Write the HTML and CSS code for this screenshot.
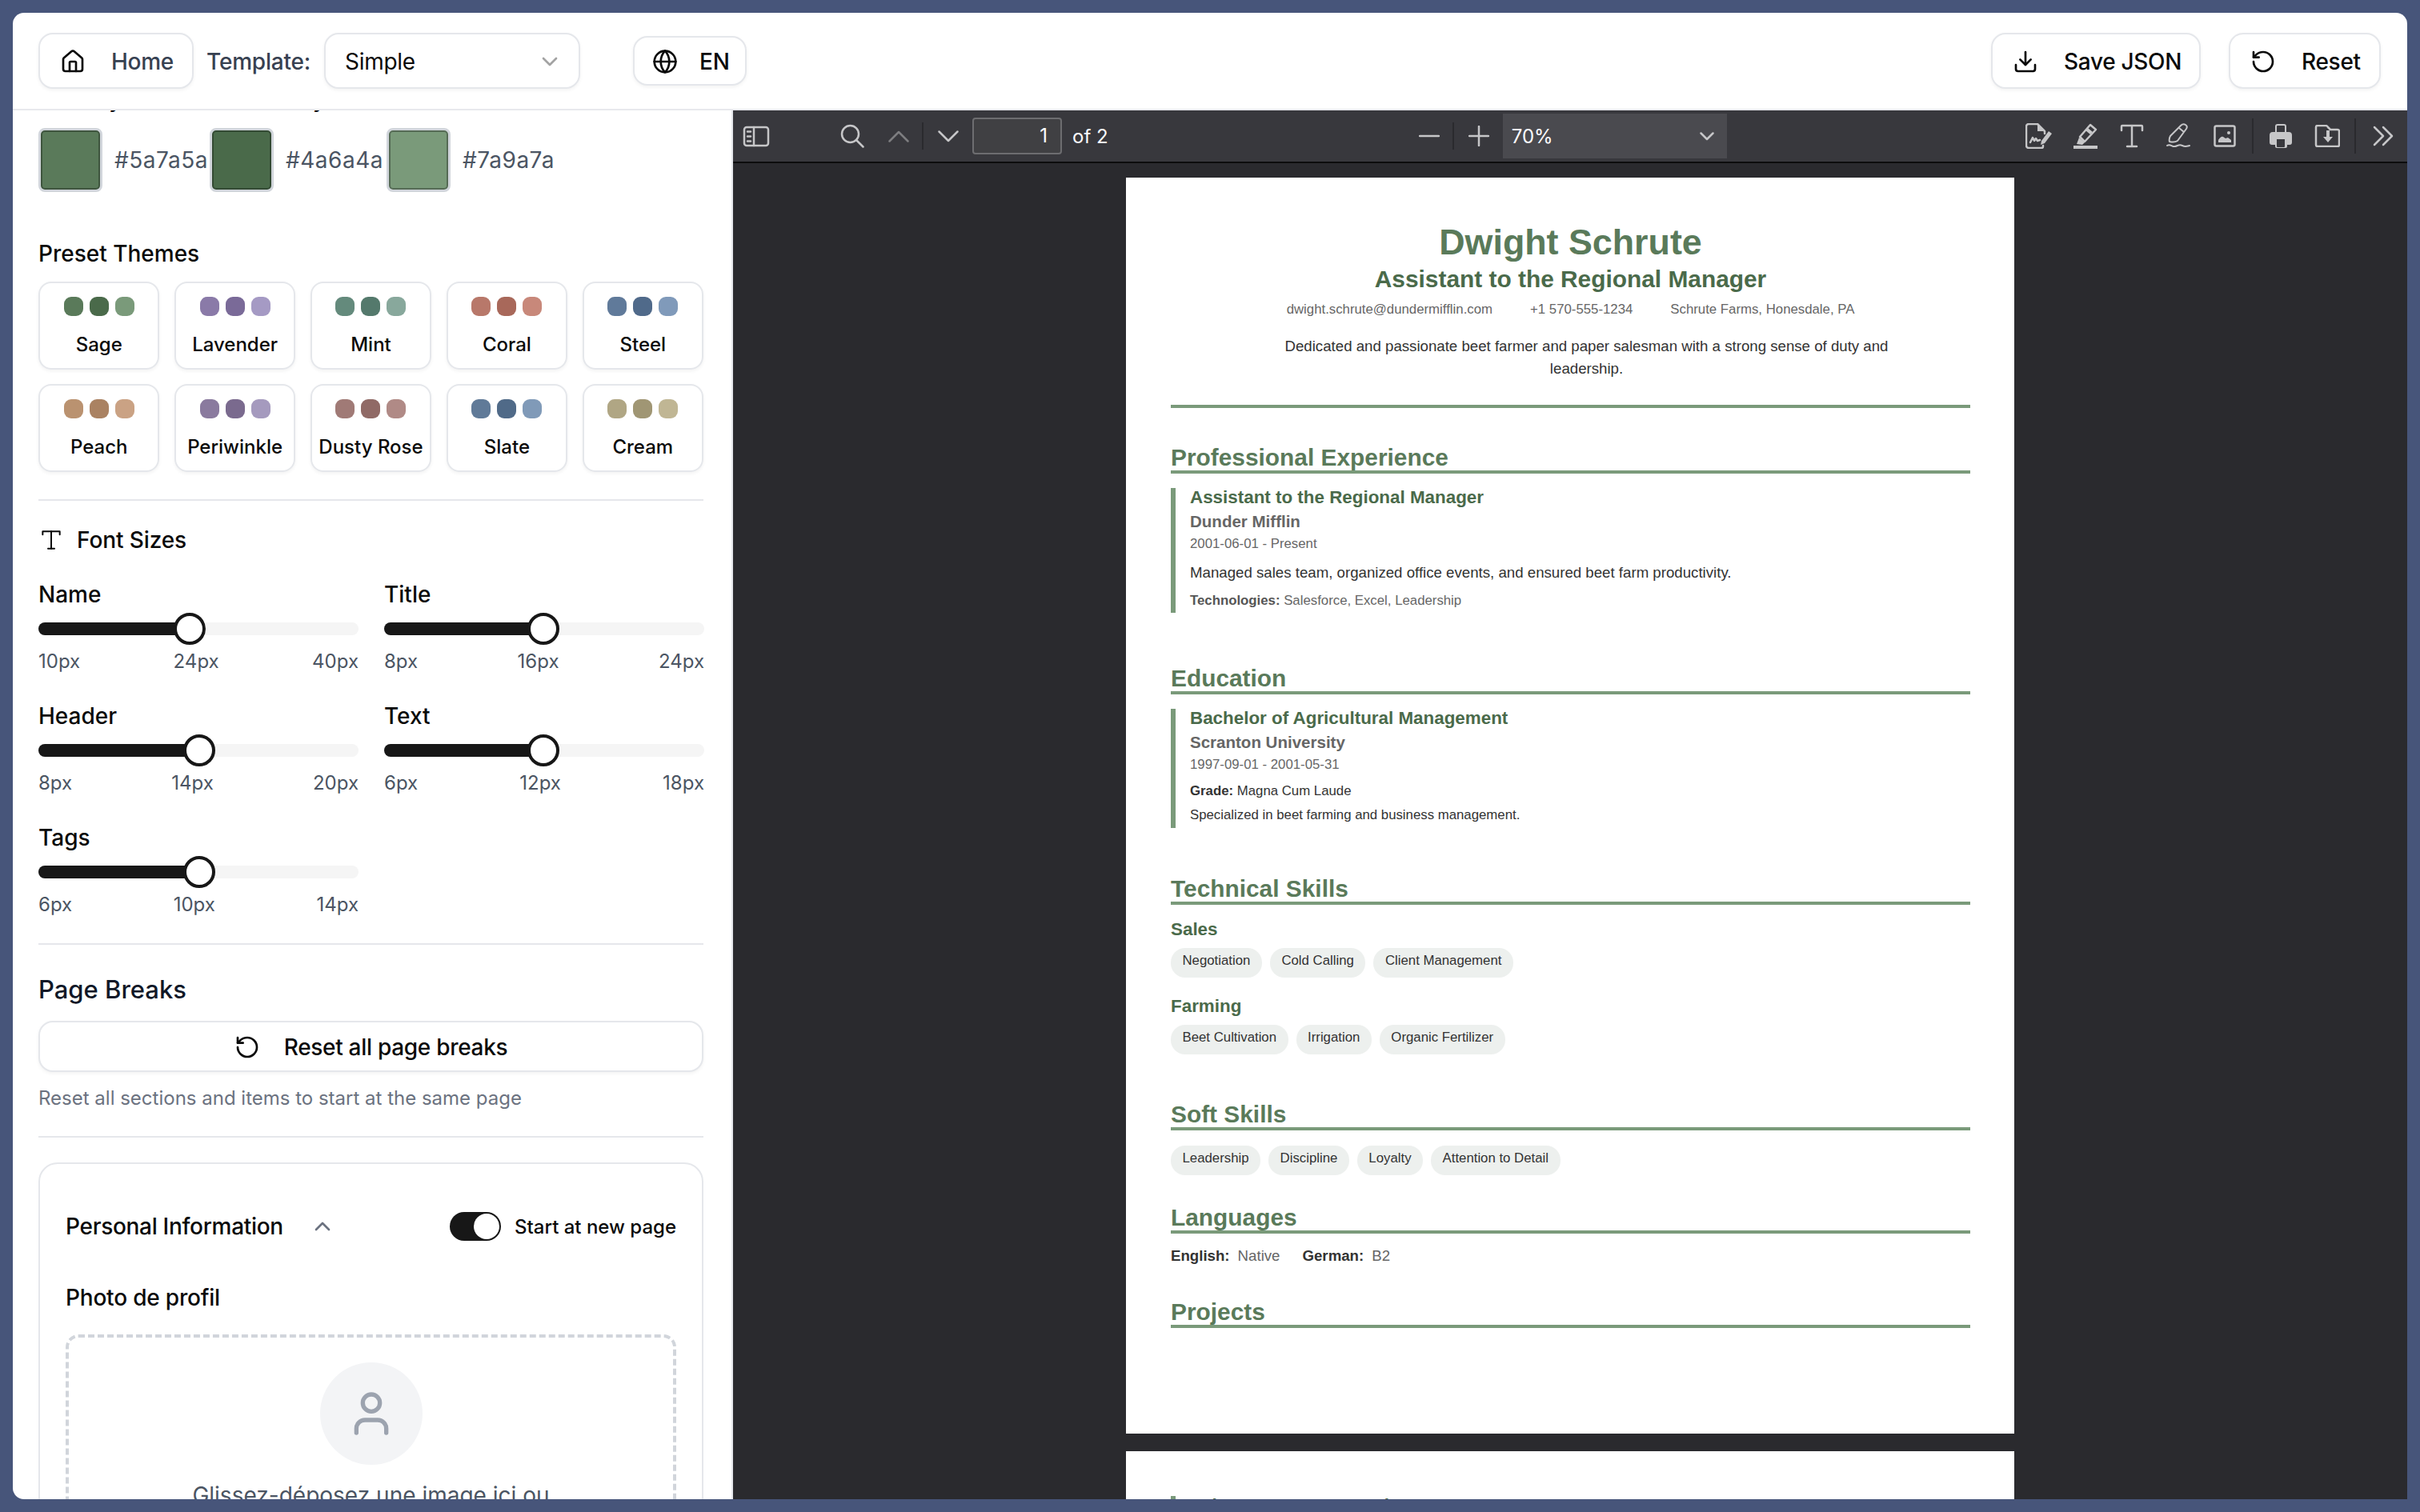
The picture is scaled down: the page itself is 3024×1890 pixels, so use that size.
FILE: index.html
```html
<!DOCTYPE html>
<html lang="en">
<head>
    <meta charset="UTF-8">
    <meta name="viewport" content="width=device-width, initial-scale=1.0">
    <title>Resume Builder</title>
    <link rel="stylesheet" href="styles.css">
</head>
<body>
<div class="window">

    <!-- Top bar -->
    <header class="topbar">
        <button class="btn btn-home">
            <svg class="icon" viewBox="0 0 24 24"><path d="M15 21v-8a1 1 0 0 0-1-1h-4a1 1 0 0 0-1 1v8"/><path d="M3 10a2 2 0 0 1 .709-1.528l7-5.999a2 2 0 0 1 2.582 0l7 5.999A2 2 0 0 1 21 10v9a2 2 0 0 1-2 2H5a2 2 0 0 1-2-2z"/></svg>
            <span>Home</span>
        </button>
        <span class="template-label">Template:</span>
        <div class="btn template-select">
            <span>Simple</span>
            <svg class="icon icon-muted" viewBox="0 0 24 24"><path d="m6 9 6 6 6-6"/></svg>
        </div>
        <button class="btn btn-lang">
            <svg class="icon" viewBox="0 0 24 24"><circle cx="12" cy="12" r="10"/><path d="M12 2a14.5 14.5 0 0 0 0 20 14.5 14.5 0 0 0 0-20"/><path d="M2 12h20"/></svg>
            <span>EN</span>
        </button>
        <button class="btn btn-save">
            <svg class="icon" viewBox="0 0 24 24"><path d="M21 15v4a2 2 0 0 1-2 2H5a2 2 0 0 1-2-2v-4"/><path d="m7 10 5 5 5-5"/><path d="M12 15V3"/></svg>
            <span>Save JSON</span>
        </button>
        <button class="btn btn-reset">
            <svg class="icon" viewBox="0 0 24 24"><path d="M3 12a9 9 0 1 0 9-9 9.75 9.75 0 0 0-6.74 2.74L3 8"/><path d="M3 3v5h5"/></svg>
            <span>Reset</span>
        </button>
    </header>

    <div class="workspace">

        <!-- Settings panel -->
        <aside class="panel">
            <div class="colors">
                <span class="color-name">Primary</span>
                <span class="color-name">Secondary</span>
                <span class="color-name">Accent</span>
                <div class="color-item"><span class="swatch swatch-a"></span><span>#5a7a5a</span></div>
                <div class="color-item"><span class="swatch swatch-b"></span><span>#4a6a4a</span></div>
                <div class="color-item"><span class="swatch swatch-c"></span><span>#7a9a7a</span></div>
            </div>

            <h3 class="presets-title">Preset Themes</h3>
            <div class="presets">
                <div class="preset"><div class="dots"><i style="background:#5a7a5a"></i><i style="background:#4a6a4a"></i><i style="background:#7a9a7a"></i></div><span>Sage</span></div>
                <div class="preset"><div class="dots"><i style="background:#8a7aa8"></i><i style="background:#7a6a98"></i><i style="background:#a59ac4"></i></div><span>Lavender</span></div>
                <div class="preset"><div class="dots"><i style="background:#648a7c"></i><i style="background:#54796c"></i><i style="background:#88a89c"></i></div><span>Mint</span></div>
                <div class="preset"><div class="dots"><i style="background:#b8786a"></i><i style="background:#a8685a"></i><i style="background:#c8887a"></i></div><span>Coral</span></div>
                <div class="preset"><div class="dots"><i style="background:#607a9a"></i><i style="background:#506a8a"></i><i style="background:#809aba"></i></div><span>Steel</span></div>
                <div class="preset"><div class="dots"><i style="background:#ba9270"></i><i style="background:#aa8262"></i><i style="background:#caa284"></i></div><span>Peach</span></div>
                <div class="preset"><div class="dots"><i style="background:#8a7a9e"></i><i style="background:#7a6a8e"></i><i style="background:#a59abe"></i></div><span>Periwinkle</span></div>
                <div class="preset"><div class="dots"><i style="background:#a07a76"></i><i style="background:#906a66"></i><i style="background:#b08a86"></i></div><span>Dusty Rose</span></div>
                <div class="preset"><div class="dots"><i style="background:#607a98"></i><i style="background:#506a88"></i><i style="background:#809ab8"></i></div><span>Slate</span></div>
                <div class="preset"><div class="dots"><i style="background:#b0a684"></i><i style="background:#a09674"></i><i style="background:#c0b694"></i></div><span>Cream</span></div>
            </div>

            <hr class="divider divider-fonts">

            <div class="font-title">
                <svg class="icon icon-type" viewBox="0 0 24 24"><path d="M4 7V4h16v3"/><path d="M9 20h6"/><path d="M12 4v16"/></svg>
                <span>Font Sizes</span>
            </div>

            <div class="sliders">
                <div class="slider">
                    <label>Name</label>
                    <div class="track"><div class="fill" style="width:47.2%"><span class="thumb"></span></div></div>
                    <div class="range"><span>10px</span><span>24px</span><span>40px</span></div>
                </div>
                <div class="slider">
                    <label>Title</label>
                    <div class="track"><div class="fill" style="width:49.8%"><span class="thumb"></span></div></div>
                    <div class="range"><span>8px</span><span>16px</span><span>24px</span></div>
                </div>
                <div class="slider">
                    <label>Header</label>
                    <div class="track"><div class="fill" style="width:50.2%"><span class="thumb"></span></div></div>
                    <div class="range"><span>8px</span><span>14px</span><span>20px</span></div>
                </div>
                <div class="slider">
                    <label>Text</label>
                    <div class="track"><div class="fill" style="width:49.8%"><span class="thumb"></span></div></div>
                    <div class="range"><span>6px</span><span>12px</span><span>18px</span></div>
                </div>
                <div class="slider">
                    <label>Tags</label>
                    <div class="track"><div class="fill" style="width:50.2%"><span class="thumb"></span></div></div>
                    <div class="range"><span>6px</span><span>10px</span><span>14px</span></div>
                </div>
            </div>

            <hr class="divider divider-breaks">

            <h2 class="breaks-title">Page Breaks</h2>
            <button class="btn btn-wide">
                <svg class="icon" viewBox="0 0 24 24"><path d="M3 12a9 9 0 1 0 9-9 9.75 9.75 0 0 0-6.74 2.74L3 8"/><path d="M3 3v5h5"/></svg>
                <span>Reset all page breaks</span>
            </button>
            <p class="hint">Reset all sections and items to start at the same page</p>

            <hr class="divider divider-card">

            <section class="card">
                <div class="card-head">
                    <div class="card-title">
                        <span>Personal Information</span>
                        <svg class="icon icon-chevron" viewBox="0 0 24 24"><path d="m18 15-6-6-6 6"/></svg>
                    </div>
                    <div class="switch-row">
                        <span class="switch"><span class="knob"></span></span>
                        <span>Start at new page</span>
                    </div>
                </div>
                <div class="photo-label">Photo de profil</div>
                <div class="dropzone">
                    <div class="avatar">
                        <svg viewBox="0 0 24 24"><path d="M19 21v-2a4 4 0 0 0-4-4H9a4 4 0 0 0-4 4v2"/><circle cx="12" cy="7" r="4"/></svg>
                    </div>
                    <p>Glissez-déposez une image ici ou</p>
                </div>
            </section>
        </aside>

        <!-- PDF viewer -->
        <main class="viewer">
            <div class="pdf-toolbar">
                <span class="tool">
                    <svg class="ti" width="34" height="27" viewBox="0 0 34 27"><rect x="2" y="2" width="30" height="23" rx="3"/><path d="M14 2v23M6 7.500h4M6 13.500h4M6 19.500h4"/></svg>
                </span>
                <span class="tool tool-search">
                    <svg class="ti" width="30" height="30" viewBox="0 0 30 30"><circle cx="12.500" cy="12.500" r="10.500"/><path d="M20 20l8.500 8.500"/></svg>
                </span>
                <span class="tool">
                    <svg class="ti ti-off" width="26" height="15" viewBox="0 0 26 15"><path d="M1.500 13.500L13 2l11.500 11.500"/></svg>
                </span>
                <span class="tool-sep"></span>
                <span class="tool">
                    <svg class="ti" width="26" height="15" viewBox="0 0 26 15"><path d="M1.500 1.500L13 13 24.500 1.500"/></svg>
                </span>
                <span class="page-input">1</span>
                <span class="page-of">of 2</span>

                <span class="tool tool-zoom">
                    <svg class="ti" width="26" height="26" viewBox="0 0 26 26"><path d="M1 13h24"/></svg>
                </span>
                <span class="tool-sep"></span>
                <span class="tool">
                    <svg class="ti" width="26" height="26" viewBox="0 0 26 26"><path d="M1 13h24M13 1v24"/></svg>
                </span>
                <div class="zoom-select">
                    <span>70%</span>
                    <svg class="ti" width="18" height="11" viewBox="0 0 18 11"><path d="M1.500 1.500L9 9l7.500-7.500"/></svg>
                </div>

                <span class="tool tool-editors">
                    <svg class="ti" width="34" height="32" viewBox="0 0 34 32"><path d="M22 28v1a2 2 0 0 1-2 2H4a3 3 0 0 1-3-3V4a3 3 0 0 1 3-3h11l9 9v3"/><path class="solid" d="M15 1l9 9h-9zM29 10l4 3-9 12-5 2 1-5z"/><path d="M6 24l3-6 2 4 2-3 2 3 3-1"/></svg>
                </span>
                <span class="tool">
                    <svg class="ti" width="32" height="32" viewBox="0 0 32 32"><path d="M9 17L22 2l7 6-14 15z"/><path class="solid" d="M19 6l6 5-3 3-6-5zM8 18l7 6-3 3-7-1z"/><path class="solid" d="M1 28h30v4H1z"/></svg>
                </span>
                <span class="tool">
                    <svg class="ti" width="30" height="30" viewBox="0 0 30 30"><path d="M2 8V3q0-1 1-1h24q1 0 1 1v5M15 2v26M9 28h12"/></svg>
                </span>
                <span class="tool">
                    <svg class="ti ti-thin" width="30" height="32" viewBox="0 0 30 32"><path d="M4 23c-1-3 0-5 1-7L18 3q3-3 6-1t1 5L14 22c-3 2-6 2-10 1zM16 6l6 5"/><path d="M1 28c4-3 6 2 10 1s5-3 9-1 5 1 9 0"/></svg>
                </span>
                <span class="tool">
                    <svg class="ti" width="28" height="28" viewBox="0 0 28 28"><rect x="1.500" y="1.500" width="25" height="25" rx="2"/><path class="solid" d="M6 22v-3c2-3 4-5 6-4l3 2 3-1 4 3v3z"/><circle class="solid" cx="19" cy="10" r="2"/></svg>
                </span>
                <span class="tool-sep sep-wide"></span>
                <span class="tool">
                    <svg class="ti" width="30" height="32" viewBox="0 0 30 32"><path class="solid" d="M8 11V4q0-3 3-3h8q3 0 3 3v7h3q4 0 4 4v9q0 3-3 3h-3v2q0 2-2 2H10q-2 0-2-2v-2H4q-3 0-3-3v-9q0-4 4-4zM10 11h10V4q0-1-1-1h-8q-1 0-1 1zM10 20v9q0 1 1 1h8q1 0 1-1v-9z" fill-rule="evenodd"/></svg>
                </span>
                <span class="tool">
                    <svg class="ti" width="32" height="28" viewBox="0 0 32 28"><path d="M20 6h9q2 0 2 2v17q0 2-2 2H4q-2 0-2-2V3q0-2 2-2h10q2 0 3 2z"/><path class="solid" d="M15 7h4v8h4l-6 7-6-7h4z"/></svg>
                </span>
                <span class="tool-sep sep-wide"></span>
                <span class="tool tool-last">
                    <svg class="ti" width="26" height="26" viewBox="0 0 26 26"><path d="M2 2l11 11L2 24M13 2l11 11-11 11"/></svg>
                </span>
            </div>

            <div class="pdf-scroll">
                <article class="pdf-page">
                    <h1 class="cv-name">Dwight Schrute</h1>
                    <div class="cv-title">Assistant to the Regional Manager</div>
                    <div class="cv-contact"><span>dwight.schrute@dundermifflin.com</span><span>+1 570-555-1234</span><span>Schrute Farms, Honesdale, PA</span></div>
                    <p class="cv-summary">Dedicated and passionate beet farmer and paper salesman with a strong sense of duty and leadership.</p>
                    <div class="cv-rule"></div>

                    <h2 class="cv-head head-experience">Professional Experience</h2>
                    <div class="cv-item">
                        <div class="item-title">Assistant to the Regional Manager</div>
                        <div class="item-org">Dunder Mifflin</div>
                        <div class="item-date">2001-06-01 - Present</div>
                        <div class="item-desc">Managed sales team, organized office events, and ensured beet farm productivity.</div>
                        <div class="item-note"><b>Technologies:</b> Salesforce, Excel, Leadership</div>
                    </div>

                    <h2 class="cv-head head-education">Education</h2>
                    <div class="cv-item">
                        <div class="item-title">Bachelor of Agricultural Management</div>
                        <div class="item-org">Scranton University</div>
                        <div class="item-date">1997-09-01 - 2001-05-31</div>
                        <div class="item-grade"><b>Grade:</b> Magna Cum Laude</div>
                        <div class="item-small">Specialized in beet farming and business management.</div>
                    </div>

                    <h2 class="cv-head head-technical">Technical Skills</h2>
                    <div class="skill-name first">Sales</div>
                    <div class="tags"><span>Negotiation</span><span>Cold Calling</span><span>Client Management</span></div>
                    <div class="skill-name">Farming</div>
                    <div class="tags"><span>Beet Cultivation</span><span>Irrigation</span><span>Organic Fertilizer</span></div>

                    <h2 class="cv-head head-soft">Soft Skills</h2>
                    <div class="tags tags-soft"><span>Leadership</span><span>Discipline</span><span>Loyalty</span><span>Attention to Detail</span></div>

                    <h2 class="cv-head head-languages">Languages</h2>
                    <div class="langs"><b>English:</b><span>Native</span><b>German:</b><span>B2</span></div>

                    <h2 class="cv-head head-projects">Projects</h2>
                </article>

                <article class="pdf-page">
                    <div class="cv-item cv-item-next">
                        <div class="item-title">Schrute Farms Expansion</div>
                    </div>
                </article>
            </div>
        </main>
    </div>
</div>
</body>
</html>
```

FILE: styles.css
```css
html, body {
    margin: 0;
    height: 100%;
    overflow: hidden;
}

body {
    background: #47557a;
    font-family: Inter, "Noto Sans", sans-serif;
    color: #0a0a0a;
}

.window {
    margin: 16px;
    height: 1858px;
    background: #fff;
    border-radius: 14px 14px 0 14px;
    overflow: hidden;
    display: flex;
    flex-direction: column;
}

/* Buttons and icons */
.btn {
    display: flex;
    align-items: center;
    box-sizing: border-box;
    height: 70px;
    background: #fff;
    border: 2px solid #e5e7eb;
    border-radius: 18px;
    box-shadow: 0 2px 4px rgba(0, 0, 0, 0.05);
    font-family: inherit;
    font-size: 28px;
    font-weight: 500;
    letter-spacing: -0.3px;
    color: #0a0a0a;
    padding: 2px 0 0;
}

.icon {
    width: 32px;
    height: 32px;
    flex: none;
    fill: none;
    stroke: currentColor;
    stroke-width: 2;
    stroke-linecap: round;
    stroke-linejoin: round;
}

.icon-muted {
    color: #a3a3a3;
}

/* Top bar */
.topbar {
    height: 120px;
    flex: none;
    display: flex;
    align-items: center;
    padding: 0 33px 0 32px;
    border-bottom: 2px solid #e8e9ed;
}

.btn-home {
    width: 194px;
    padding-left: 25px;
    gap: 32px;
    color: #374151;
}

.btn-home .icon {
    color: #0a0a0a;
}

.template-label {
    margin: 2px 17px 0 16px;
    font-size: 28px;
    font-weight: 500;
    letter-spacing: -0.2px;
    color: #374151;
}

.template-select {
    width: 320px;
    padding-left: 24px;
    padding-right: 20px;
    justify-content: space-between;
    font-weight: 400;
}

.btn-lang {
    width: 142px;
    height: 62px;
    margin-left: 66px;
    padding-left: 22px;
    gap: 27px;
}

.btn-save {
    width: 262px;
    margin-left: auto;
    padding-left: 25px;
    gap: 32px;
}

.btn-reset {
    width: 190px;
    margin-left: 35px;
    padding-left: 25px;
    gap: 32px;
}

.workspace {
    flex: 1;
    display: flex;
    min-height: 0;
}

/* Settings panel */
.panel {
    width: 900px;
    flex: none;
    box-sizing: border-box;
    padding: 0 35px 0 32px;
    border-right: 2px solid #e5e7eb;
    overflow: hidden;
}

.colors {
    display: grid;
    grid-template-columns: 214px 221px 1fr;
    margin-top: -34px;
}

.color-name {
    font-size: 28px;
    font-weight: 500;
    line-height: 40px;
    margin-bottom: 16px;
}

.color-item {
    display: flex;
    align-items: center;
    gap: 15px;
    font-size: 28px;
    letter-spacing: 0.5px;
    color: #4b5563;
}

.swatch {
    width: 80px;
    height: 80px;
    flex: none;
    box-sizing: border-box;
    border: 3px solid #d1d5db;
    border-radius: 8px;
    box-shadow: inset 0 0 0 2px rgba(0, 0, 0, 0.3);
}

.swatch-a { background: #5a7a5a; }
.swatch-b { background: #4a6a4a; }
.swatch-c { background: #7a9a7a; }

.presets-title {
    margin: 57px 0 15px;
    font-size: 28px;
    font-weight: 500;
    line-height: 40px;
}

.presets {
    display: grid;
    grid-template-columns: repeat(5, 1fr);
    gap: 18px 18.500px;
}

.preset {
    box-sizing: border-box;
    height: 110px;
    display: flex;
    flex-direction: column;
    align-items: center;
    padding-top: 17px;
    border: 2px solid #e5e7eb;
    border-radius: 16px;
    box-shadow: 0 2px 4px rgba(0, 0, 0, 0.05);
    font-size: 24px;
    font-weight: 500;
    white-space: nowrap;
}

.dots {
    display: flex;
    gap: 8px;
    margin-bottom: 21px;
}

.dots i {
    width: 24px;
    height: 24px;
    border-radius: 9px;
}

.divider {
    margin: 0;
    border: 0;
    border-top: 2px solid #e5e7eb;
}

.divider-fonts { margin-top: 34px; }

.font-title {
    display: flex;
    align-items: center;
    gap: 16px;
    height: 40px;
    margin-top: 29px;
    font-size: 28px;
    font-weight: 500;
    letter-spacing: -0.1px;
}

.icon-type {
    stroke-width: 1.500;
}

.sliders {
    display: grid;
    grid-template-columns: 400px 400px;
    gap: 32px;
    margin-top: 28px;
}

.slider label {
    display: block;
    font-size: 28px;
    font-weight: 500;
    line-height: 40px;
}

.track {
    height: 16px;
    margin: 15px 0 17px;
    border-radius: 8px;
    background: #f5f5f5;
}

.fill {
    position: relative;
    height: 100%;
    border-radius: 8px;
    background: #171717;
}

.thumb {
    position: absolute;
    right: -20px;
    top: -12px;
    width: 40px;
    height: 40px;
    box-sizing: border-box;
    border: 4px solid #171717;
    border-radius: 50%;
    background: #fff;
}

.range {
    display: flex;
    justify-content: space-between;
    font-size: 24px;
    line-height: 32px;
    color: #4b5563;
}

.divider-breaks { margin-top: 32px; }

.breaks-title {
    margin: 32px 0 15px;
    font-size: 31px;
    font-weight: 500;
    line-height: 48px;
    color: #111827;
}

.btn-wide {
    width: 100%;
    height: 64px;
    justify-content: center;
    gap: 30px;
}

.hint {
    margin: 15px 0 0;
    font-size: 24px;
    line-height: 36px;
    color: #6b7280;
}

.divider-card { margin-top: 29px; }

.card {
    margin-top: 31px;
    padding: 55px 32px 0;
    border: 2px solid #e5e7eb;
    border-radius: 24px;
}

.card-head {
    display: flex;
    align-items: center;
    justify-content: space-between;
    height: 46px;
}

.card-title {
    display: flex;
    align-items: center;
    gap: 33px;
    font-size: 28px;
    font-weight: 500;
    letter-spacing: -0.3px;
}

.icon-chevron {
    color: #6b7280;
}

.switch-row {
    display: flex;
    align-items: center;
    gap: 17px;
    font-size: 24px;
    font-weight: 500;
}

.switch {
    display: flex;
    justify-content: flex-end;
    box-sizing: border-box;
    width: 64px;
    height: 36px;
    padding: 2px;
    border-radius: 18px;
    background: #171717;
}

.knob {
    width: 32px;
    height: 32px;
    border-radius: 50%;
    background: #fff;
}

.photo-label {
    margin-top: 46px;
    font-size: 28px;
    font-weight: 500;
    letter-spacing: -0.2px;
    line-height: 40px;
}

.dropzone {
    margin-top: 26px;
    padding-top: 31px;
    height: 400px;
    border: 4px dashed #d1d5db;
    border-radius: 16px;
    text-align: center;
}

.avatar {
    display: flex;
    align-items: center;
    justify-content: center;
    width: 128px;
    height: 128px;
    margin: 0 auto;
    border-radius: 50%;
    background: #f3f4f6;
}

.avatar svg {
    width: 64px;
    height: 64px;
    fill: none;
    stroke: #9ca3af;
    stroke-width: 2;
    stroke-linecap: round;
    stroke-linejoin: round;
}

.dropzone p {
    margin: 18px 0 0;
    font-size: 28px;
    line-height: 40px;
    color: #4b5563;
}

/* PDF viewer */
.viewer {
    flex: 1;
    min-width: 0;
    display: flex;
    flex-direction: column;
    background: #2a2a2e;
}

.pdf-toolbar {
    height: 64px;
    flex: none;
    display: flex;
    align-items: center;
    background: #38383d;
    border-bottom: 2px solid #0c0c0d;
    color: #fbfbfe;
}

.tool {
    width: 58px;
    height: 58px;
    flex: none;
    display: flex;
    align-items: center;
    justify-content: center;
}

.ti {
    fill: none;
    stroke: #c6c6c8;
    stroke-width: 2.500;
    stroke-linecap: round;
    stroke-linejoin: round;
}

.ti .solid {
    fill: #c6c6c8;
    stroke: none;
}

.ti-off {
    stroke: #7d7d80;
}

.ti-thin {
    stroke-width: 2;
}

.tool-search { margin-left: 62px; }
.tool-zoom { margin-left: 372px; }
.tool-editors { margin-left: auto; }
.tool-last { margin-right: 1px; }

.tool-sep {
    width: 2px;
    height: 34px;
    flex: none;
    margin-right: 2px;
    background: #2a2a2e;
}

.sep-wide {
    margin: 0 5px;
    height: 44px;
}

.page-input {
    box-sizing: border-box;
    width: 112px;
    height: 46px;
    margin-left: 1px;
    padding-right: 16px;
    border: 2px solid #6d6d70;
    border-radius: 4px;
    background: #404043;
    font-size: 24px;
    line-height: 42px;
    text-align: right;
}

.page-of {
    margin-left: 13px;
    font-size: 24px;
}

.zoom-select {
    box-sizing: border-box;
    width: 280px;
    height: 56px;
    margin-left: 1px;
    padding: 0 16px 0 11px;
    display: flex;
    align-items: center;
    justify-content: space-between;
    background: #4a4a4f;
    font-size: 24px;
}

.pdf-scroll {
    flex: 1;
    min-height: 0;
    overflow: hidden;
    padding-top: 18px;
}

/* Resume page */
.pdf-page {
    box-sizing: border-box;
    width: 1110px;
    height: 1570px;
    margin: 0 auto 22px;
    padding: 54px 55px 0 56px;
    background: #fff;
    font-family: "Liberation Sans", Arial, sans-serif;
    color: #333;
}

.cv-name {
    margin: 0;
    font-size: 44.800px;
    line-height: 52px;
    font-weight: 700;
    color: #5a7a5a;
    text-align: center;
}

.cv-title {
    margin-top: 3px;
    font-size: 29.870px;
    line-height: 36px;
    font-weight: 700;
    color: #4a6a4a;
    text-align: center;
}

.cv-contact {
    display: flex;
    justify-content: center;
    gap: 47px;
    margin-top: 8px;
    font-size: 16.800px;
    line-height: 24px;
    color: #666;
}

.cv-summary {
    margin: 20px 70px 0 110px;
    font-size: 18.670px;
    line-height: 28px;
    text-align: center;
}

.cv-rule {
    height: 4px;
    margin-top: 31px;
    background: #7a9a7a;
}

.cv-head {
    margin: 0;
    font-size: 29.870px;
    line-height: 32px;
    font-weight: 700;
    color: #5a7a5a;
    border-bottom: 4px solid #7a9a7a;
}

.head-experience { margin-top: 46px; }
.head-education { margin-top: 66px; }
.head-technical { margin-top: 60px; }
.head-soft { margin-top: 59px; }
.head-languages { margin-top: 37px; }
.head-projects { margin-top: 42px; }

.cv-item {
    margin-top: 18px;
    padding: 0 0 4px 18px;
    border-left: 6px solid #7a9a7a;
}

.cv-item-next {
    margin-top: 2px;
}

.item-title {
    font-size: 22.400px;
    line-height: 24px;
    font-weight: 700;
    color: #4a6a4a;
}

.item-org {
    margin-top: 6px;
    font-size: 20.530px;
    line-height: 24px;
    font-weight: 700;
    color: #666;
}

.item-date {
    margin-top: 5px;
    font-size: 16.800px;
    line-height: 22px;
    color: #666;
}

.item-desc {
    margin-top: 13px;
    font-size: 18.670px;
    line-height: 24px;
}

.item-note {
    margin-top: 12px;
    font-size: 16.800px;
    line-height: 22px;
    color: #666;
}

.item-note b {
    color: #555;
}

.item-grade {
    margin-top: 10px;
    font-size: 16.800px;
    line-height: 24px;
}

.item-small {
    margin-top: 6px;
    font-size: 16.800px;
    line-height: 24px;
}

.skill-name {
    margin-top: 24px;
    font-size: 22.400px;
    line-height: 24px;
    font-weight: 700;
    color: #4a6a4a;
}

.skill-name.first { margin-top: 19px; }

.tags {
    display: flex;
    gap: 10px;
    margin-top: 11px;
}

.tags span {
    padding: 4px 14.500px 10px;
    border-radius: 18px;
    background: #edf0ee;
    font-size: 16.800px;
    line-height: 23px;
}

.tags-soft { margin-top: 19px; }

.langs {
    display: flex;
    gap: 10px;
    margin-top: 16px;
    font-size: 18.670px;
    line-height: 24px;
    color: #666;
}

.langs b {
    color: #333;
}

.langs span + b {
    margin-left: 18px;
}
```
